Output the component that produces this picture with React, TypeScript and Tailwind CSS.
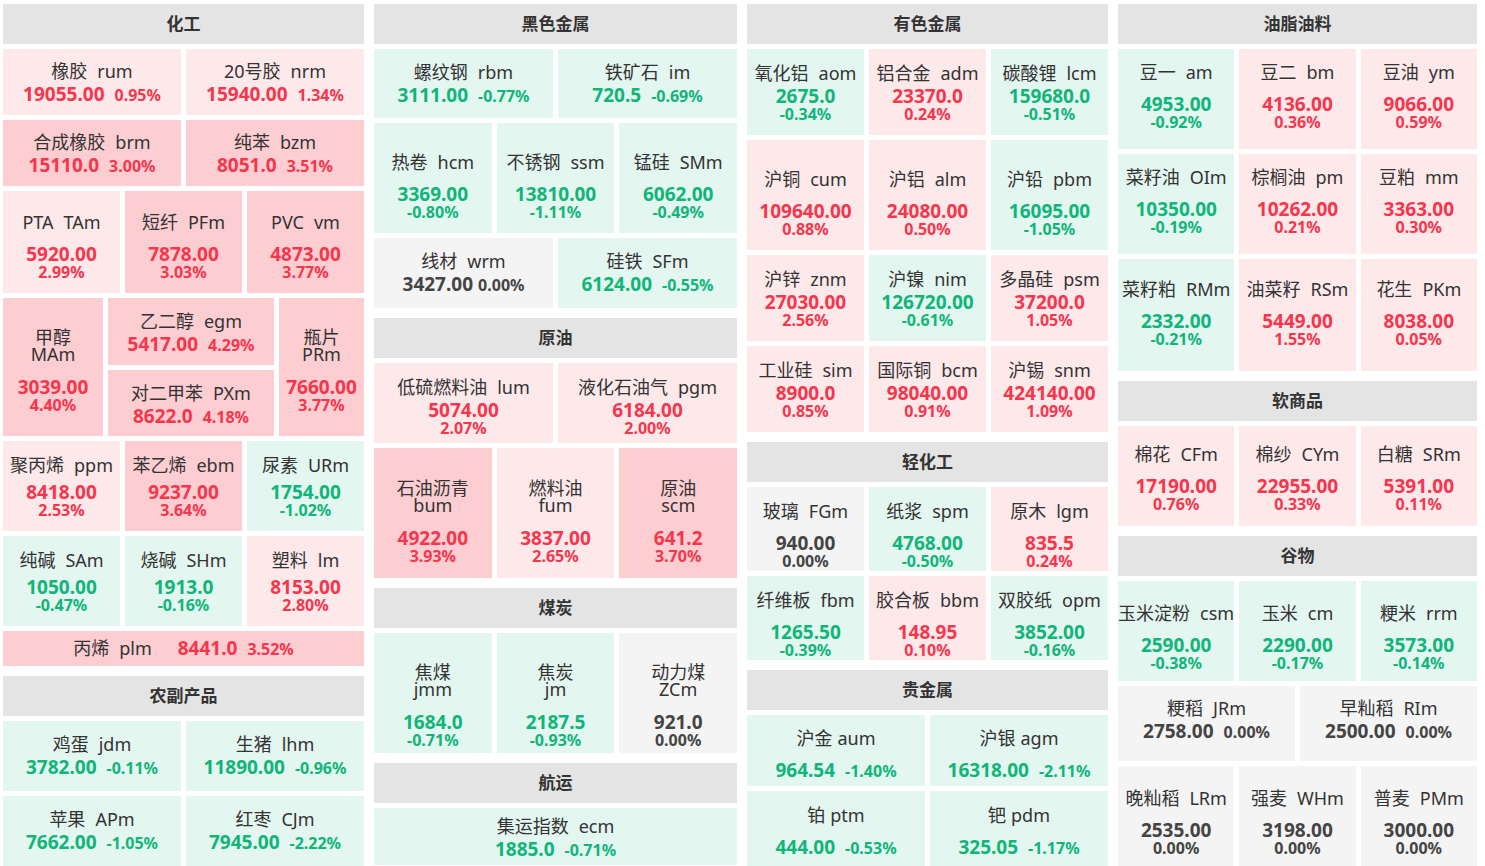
import type { ReactNode } from 'react';

type Mode = 'in' | 'st' | 'wr' | 'line';
type Item = {
  n: string;
  c: string;
  v: string;
  p: number;
  m?: Mode;
  g?: 'a' | 'b' | 'c' | 'd';
  s?: boolean;
  t?: boolean;
};
type Row = { h: string; y?: string; items: Item[] };
type Sec = { title: string; rows: Row[] };

const gapClass = { a: 'mt-[3px]', b: 'mt-[7px]', c: 'mt-[12px]', d: 'mt-[14px]' };

const tone = (p: number) => {
  if (p === 0) return 'bg-[#f4f4f4] text-[#444]';
  if (p < 0) return 'bg-[#e3f6ef] text-[#10b57a]';
  if (p >= 3) return 'bg-[#fccdd1] text-[#f5364c]';
  return 'bg-[#fde8ea] text-[#f5364c]';
};

const pct = (p: number) => `${p.toFixed(2)}%`;

const Cell = ({ it, className = '' }: { it: Item; className?: string }) => {
  const mode = it.m ?? 'st';
  const g = gapClass[it.g ?? 'a'];

  if (mode === 'line') {
    return (
      <div className={`flex items-center justify-center ${tone(it.p)} ${className}`}>
        <span className="whitespace-nowrap text-[18px] text-[#333]">
          {it.n}
          <span className="ml-[10px]">{it.c}</span>
        </span>
        <span className="ml-[26px] text-[19px] font-bold">{it.v}</span>
        <span className="ml-[10px] text-[16px] font-bold">{pct(it.p)}</span>
      </div>
    );
  }

  const name =
    mode === 'wr' ? (
      <div className="text-[18px] leading-[17px] text-[#333]">
        <div>{it.n}</div>
        <div>{it.c}</div>
      </div>
    ) : (
      <div className="whitespace-nowrap text-[18px] leading-[20px] text-[#333]">
        {it.n}
        <span className={it.s ? 'ml-[5px]' : 'ml-[10px]'}>{it.c}</span>
      </div>
    );

  return (
    <div className={`flex flex-col items-center justify-center text-center ${tone(it.p)} ${className}`}>
      {name}
      {mode === 'in' ? (
        <div className={`flex items-baseline justify-center whitespace-nowrap ${g}`}>
          <span className="text-[19px] font-bold leading-[20px]">{it.v}</span>
          <span className={`${it.t ? 'ml-[5px]' : 'ml-[10px]'} text-[16px] font-bold leading-[20px]`}>
            {pct(it.p)}
          </span>
        </div>
      ) : (
        <div className={`flex flex-col items-center ${g}`}>
          <span className="text-[19px] font-bold leading-[20px]">{it.v}</span>
          <span className="text-[16px] font-bold leading-[16px]">{pct(it.p)}</span>
        </div>
      )}
    </div>
  );
};

const Section = ({ title, children }: { title: string; children: ReactNode }) => (
  <section className="flex flex-col gap-[5px]">
    <h2 className="flex h-[40px] items-center justify-center bg-[#e4e4e4] text-[17px] font-bold text-[#333]">
      {title}
    </h2>
    {children}
  </section>
);

const Rows = ({ rows }: { rows: Row[] }) => (
  <>
    {rows.map((r, i) => (
      <div key={i} className={`flex gap-[5px] ${r.h}`}>
        {r.items.map((it) => (
          <Cell key={it.c} it={it} className={`min-w-0 flex-1 basis-0 ${r.y ?? ''}`} />
        ))}
      </div>
    ))}
  </>
);

const col2: Sec[] = [
  {
    title: '黑色金属',
    rows: [
      {
        h: 'h-[69px]',
        items: [
          { n: '螺纹钢', c: 'rbm', v: '3111.00', p: -0.77, m: 'in' },
          { n: '铁矿石', c: 'im', v: '720.5', p: -0.69, m: 'in' },
        ],
      },
      {
        h: 'h-[110px]',
        y: 'pt-[16px]',
        items: [
          { n: '热卷', c: 'hcm', v: '3369.00', p: -0.8, g: 'c' },
          { n: '不锈钢', c: 'ssm', v: '13810.00', p: -1.11, g: 'c' },
          { n: '锰硅', c: 'SMm', v: '6062.00', p: -0.49, g: 'c' },
        ],
      },
      {
        h: 'h-[70px]',
        items: [
          { n: '线材', c: 'wrm', v: '3427.00', p: 0, m: 'in', t: true },
          { n: '硅铁', c: 'SFm', v: '6124.00', p: -0.55, m: 'in' },
        ],
      },
    ],
  },
  {
    title: '原油',
    rows: [
      {
        h: 'h-[80px]',
        y: 'pt-[6px]',
        items: [
          { n: '低硫燃料油', c: 'lum', v: '5074.00', p: 2.07 },
          { n: '液化石油气', c: 'pgm', v: '6184.00', p: 2.0 },
        ],
      },
      {
        h: 'h-[130px]',
        y: 'pt-[17px]',
        items: [
          { n: '石油沥青', c: 'bum', v: '4922.00', p: 3.93, m: 'wr', g: 'd' },
          { n: '燃料油', c: 'fum', v: '3837.00', p: 2.65, m: 'wr', g: 'd' },
          { n: '原油', c: 'scm', v: '641.2', p: 3.7, m: 'wr', g: 'd' },
        ],
      },
    ],
  },
  {
    title: '煤炭',
    rows: [
      {
        h: 'h-[120px]',
        y: 'pt-[25px]',
        items: [
          { n: '焦煤', c: 'jmm', v: '1684.0', p: -0.71, m: 'wr', g: 'd' },
          { n: '焦炭', c: 'jm', v: '2187.5', p: -0.93, m: 'wr', g: 'd' },
          { n: '动力煤', c: 'ZCm', v: '921.0', p: 0, m: 'wr', g: 'd' },
        ],
      },
    ],
  },
  {
    title: '航运',
    rows: [
      { h: 'h-[57px]', y: 'pt-[3px]', items: [{ n: '集运指数', c: 'ecm', v: '1885.0', p: -0.71, m: 'in' }] },
    ],
  },
];

const col3: Sec[] = [
  {
    title: '有色金属',
    rows: [
      {
        h: 'h-[86px]',
        items: [
          { n: '氧化铝', c: 'aom', v: '2675.0', p: -0.34 },
          { n: '铝合金', c: 'adm', v: '23370.0', p: 0.24 },
          { n: '碳酸锂', c: 'lcm', v: '159680.0', p: -0.51 },
        ],
      },
      {
        h: 'h-[110px]',
        y: 'pt-[16px]',
        items: [
          { n: '沪铜', c: 'cum', v: '109640.00', p: 0.88, g: 'c' },
          { n: '沪铝', c: 'alm', v: '24080.00', p: 0.5, g: 'c' },
          { n: '沪铅', c: 'pbm', v: '16095.00', p: -1.05, g: 'c' },
        ],
      },
      {
        h: 'h-[86px]',
        items: [
          { n: '沪锌', c: 'znm', v: '27030.00', p: 2.56 },
          { n: '沪镍', c: 'nim', v: '126720.00', p: -0.61 },
          { n: '多晶硅', c: 'psm', v: '37200.0', p: 1.05 },
        ],
      },
      {
        h: 'h-[86px]',
        items: [
          { n: '工业硅', c: 'sim', v: '8900.0', p: 0.85 },
          { n: '国际铜', c: 'bcm', v: '98040.00', p: 0.91 },
          { n: '沪锡', c: 'snm', v: '424140.00', p: 1.09 },
        ],
      },
    ],
  },
  {
    title: '轻化工',
    rows: [
      {
        h: 'h-[84px]',
        y: 'pt-[12px]',
        items: [
          { n: '玻璃', c: 'FGm', v: '940.00', p: 0, g: 'c' },
          { n: '纸浆', c: 'spm', v: '4768.00', p: -0.5, g: 'c' },
          { n: '原木', c: 'lgm', v: '835.5', p: 0.24, g: 'c' },
        ],
      },
      {
        h: 'h-[84px]',
        y: 'pt-[12px]',
        items: [
          { n: '纤维板', c: 'fbm', v: '1265.50', p: -0.39, g: 'c' },
          { n: '胶合板', c: 'bbm', v: '148.95', p: 0.1, g: 'c' },
          { n: '双胶纸', c: 'opm', v: '3852.00', p: -0.16, g: 'c' },
        ],
      },
    ],
  },
  {
    title: '贵金属',
    rows: [
      {
        h: 'h-[71px]',
        y: 'pt-[7px]',
        items: [
          { n: '沪金', c: 'aum', v: '964.54', p: -1.4, m: 'in', g: 'c', s: true },
          { n: '沪银', c: 'agm', v: '16318.00', p: -2.11, m: 'in', g: 'c', s: true },
        ],
      },
      {
        h: 'h-[75px]',
        y: 'pt-[5px]',
        items: [
          { n: '铂', c: 'ptm', v: '444.00', p: -0.53, m: 'in', g: 'c', s: true },
          { n: '钯', c: 'pdm', v: '325.05', p: -1.17, m: 'in', g: 'c', s: true },
        ],
      },
    ],
  },
];

const col4: Sec[] = [
  {
    title: '油脂油料',
    rows: [
      {
        h: 'h-[100px]',
        y: 'pb-[6px]',
        items: [
          { n: '豆一', c: 'am', v: '4953.00', p: -0.92, g: 'c' },
          { n: '豆二', c: 'bm', v: '4136.00', p: 0.36, g: 'c' },
          { n: '豆油', c: 'ym', v: '9066.00', p: 0.59, g: 'c' },
        ],
      },
      {
        h: 'h-[100px]',
        y: 'pb-[6px]',
        items: [
          { n: '菜籽油', c: 'OIm', v: '10350.00', p: -0.19, g: 'c' },
          { n: '棕榈油', c: 'pm', v: '10262.00', p: 0.21, g: 'c' },
          { n: '豆粕', c: 'mm', v: '3363.00', p: 0.3, g: 'c' },
        ],
      },
      {
        h: 'h-[112px]',
        y: 'pb-[4px]',
        items: [
          { n: '菜籽粕', c: 'RMm', v: '2332.00', p: -0.21, g: 'c' },
          { n: '油菜籽', c: 'RSm', v: '5449.00', p: 1.55, g: 'c' },
          { n: '花生', c: 'PKm', v: '8038.00', p: 0.05, g: 'c' },
        ],
      },
    ],
  },
  {
    title: '软商品',
    rows: [
      {
        h: 'h-[100px]',
        y: 'pt-[4px]',
        items: [
          { n: '棉花', c: 'CFm', v: '17190.00', p: 0.76, g: 'c' },
          { n: '棉纱', c: 'CYm', v: '22955.00', p: 0.33, g: 'c' },
          { n: '白糖', c: 'SRm', v: '5391.00', p: 0.11, g: 'c' },
        ],
      },
    ],
  },
  {
    title: '谷物',
    rows: [
      {
        h: 'h-[100px]',
        y: 'pt-[12px]',
        items: [
          { n: '玉米淀粉', c: 'csm', v: '2590.00', p: -0.38, g: 'c' },
          { n: '玉米', c: 'cm', v: '2290.00', p: -0.17, g: 'c' },
          { n: '粳米', c: 'rrm', v: '3573.00', p: -0.14, g: 'c' },
        ],
      },
      {
        h: 'h-[75px]',
        y: 'pb-[7px]',
        items: [
          { n: '粳稻', c: 'JRm', v: '2758.00', p: 0, m: 'in' },
          { n: '早籼稻', c: 'RIm', v: '2500.00', p: 0, m: 'in' },
        ],
      },
      {
        h: 'h-[100px]',
        y: 'pt-[12px]',
        items: [
          { n: '晚籼稻', c: 'LRm', v: '2535.00', p: 0, g: 'c' },
          { n: '强麦', c: 'WHm', v: '3198.00', p: 0, g: 'c' },
          { n: '普麦', c: 'PMm', v: '3000.00', p: 0, g: 'c' },
        ],
      },
    ],
  },
];

const Column = ({ secs }: { secs: Sec[] }) => (
  <div className="flex flex-col gap-[10px]">
    {secs.map((s) => (
      <Section key={s.title} title={s.title}>
        <Rows rows={s.rows} />
      </Section>
    ))}
  </div>
);

// 化工 has a nested block, so it is written out by hand
const ChemColumn = () => (
  <div className="flex flex-col gap-[10px]">
    <Section title="化工">
      <Rows
        rows={[
          {
            h: 'h-[66px]',
            y: 'pt-[2px]',
            items: [
              { n: '橡胶', c: 'rum', v: '19055.00', p: 0.95, m: 'in' },
              { n: '20号胶', c: 'nrm', v: '15940.00', p: 1.34, m: 'in' },
            ],
          },
          {
            h: 'h-[66px]',
            y: 'pt-[2px]',
            items: [
              { n: '合成橡胶', c: 'brm', v: '15110.0', p: 3.0, m: 'in' },
              { n: '纯苯', c: 'bzm', v: '8051.0', p: 3.51, m: 'in' },
            ],
          },
          {
            h: 'h-[102px]',
            y: 'pt-[8px]',
            items: [
              { n: 'PTA', c: 'TAm', v: '5920.00', p: 2.99, g: 'c' },
              { n: '短纤', c: 'PFm', v: '7878.00', p: 3.03, g: 'c' },
              { n: 'PVC', c: 'vm', v: '4873.00', p: 3.77, g: 'c' },
            ],
          },
        ]}
      />
      <div className="flex h-[138px] gap-[5px]">
        <Cell it={{ n: '甲醇', c: 'MAm', v: '3039.00', p: 4.4, m: 'wr', g: 'd' }} className="w-[100px] pt-[7px]" />
        <div className="flex w-[166px] flex-col gap-[5px]">
          <Cell it={{ n: '乙二醇', c: 'egm', v: '5417.00', p: 4.29, m: 'in' }} className="flex-1 pt-[4px]" />
          <Cell it={{ n: '对二甲苯', c: 'PXm', v: '8622.0', p: 4.18, m: 'in' }} className="flex-1 pt-[4px]" />
        </div>
        <Cell it={{ n: '瓶片', c: 'PRm', v: '7660.00', p: 3.77, m: 'wr', g: 'd' }} className="flex-1 pt-[7px]" />
      </div>
      <Rows
        rows={[
          {
            h: 'h-[90px]',
            items: [
              { n: '聚丙烯', c: 'ppm', v: '8418.00', p: 2.53, g: 'b' },
              { n: '苯乙烯', c: 'ebm', v: '9237.00', p: 3.64, g: 'b' },
              { n: '尿素', c: 'URm', v: '1754.00', p: -1.02, g: 'b' },
            ],
          },
          {
            h: 'h-[90px]',
            items: [
              { n: '纯碱', c: 'SAm', v: '1050.00', p: -0.47, g: 'b' },
              { n: '烧碱', c: 'SHm', v: '1913.0', p: -0.16, g: 'b' },
              { n: '塑料', c: 'lm', v: '8153.00', p: 2.8, g: 'b' },
            ],
          },
        ]}
      />
      <Cell it={{ n: '丙烯', c: 'plm', v: '8441.0', p: 3.52, m: 'line' }} className="h-[35px]" />
    </Section>
    <Section title="农副产品">
      <Rows
        rows={[
          {
            h: 'h-[70px]',
            items: [
              { n: '鸡蛋', c: 'jdm', v: '3782.00', p: -0.11, m: 'in' },
              { n: '生猪', c: 'lhm', v: '11890.00', p: -0.96, m: 'in' },
            ],
          },
          {
            h: 'h-[70px]',
            items: [
              { n: '苹果', c: 'APm', v: '7662.00', p: -1.05, m: 'in' },
              { n: '红枣', c: 'CJm', v: '7945.00', p: -2.22, m: 'in' },
            ],
          },
        ]}
      />
    </Section>
  </div>
);

export default function App() {
  return (
    <div className="min-h-[866px] bg-white pl-[3px] pt-[4px] font-['Noto_Sans','Noto_Sans_CJK_SC',sans-serif]">
      <div className="grid grid-cols-[361px_363px_361px_359px] gap-x-[10px]">
        <ChemColumn />
        <Column secs={col2} />
        <Column secs={col3} />
        <Column secs={col4} />
      </div>
    </div>
  );
}
